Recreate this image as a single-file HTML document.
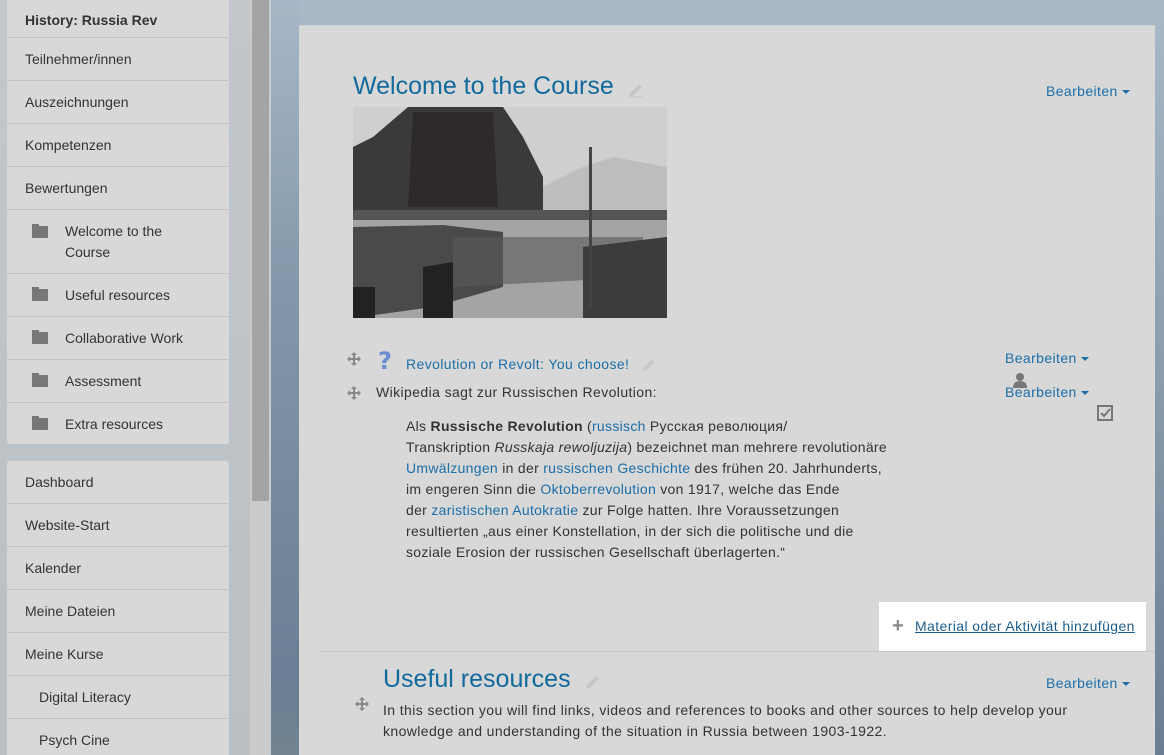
<!DOCTYPE html>
<html><head><meta charset="utf-8">
<style>
*{margin:0;padding:0;box-sizing:border-box}
html,body{width:1164px;height:755px;overflow:hidden}
body{position:relative;font-family:"Liberation Sans",Arial,sans-serif;font-size:14px;color:#333;
background:linear-gradient(180deg,#a9b9c7 0%,#8a9cad 50%,#6a7d92 100%)}
.leftbg{position:absolute;left:0;top:0;width:250px;height:755px;background:linear-gradient(180deg,#c3c7cb,#b9bfc3)}
.track{position:absolute;left:250px;top:0;width:21px;height:755px;background:#cbcbcb}
.thumb{position:absolute;left:252px;top:0;width:17px;height:501px;background:#a4a4a4}
.blue{position:absolute;left:271px;top:0;width:28px;height:755px;background:linear-gradient(180deg,#a7b7c6,#8296a9 40%,#6a7f95 90%,#72838f)}
.blk{position:absolute;left:7px;width:222px;background:#d8d8d8;border-radius:3px;overflow:hidden}
.it{position:absolute;left:0;width:222px;border-bottom:1px solid #c4c4c4;padding-left:18px;display:flex;align-items:center;font-size:14px;color:#333}
.fold{display:inline-block;width:16px;height:12px;background:#777;margin-left:7px;margin-right:17px;position:relative;border-radius:1px}
.fold:before{content:"";position:absolute;left:0;top:-2px;width:7px;height:3px;background:#777}
.panel{position:absolute;left:299px;top:25px;width:856px;height:730px;background:#d8d8d8;border-top:1px solid #cfcfcf}
.a{position:absolute;white-space:nowrap}
.h{color:#126a9c;font-size:25px}
.bb{color:#1b6ea8;font-size:14px}
.car{display:inline-block;border-left:4px solid transparent;border-right:4px solid transparent;border-top:4px solid #1b6ea8;margin-left:4px;vertical-align:middle}
.ls{letter-spacing:0.4px}
.txt{position:absolute;left:406px;top:416px;width:540px;line-height:21px;font-size:14px;color:#333;letter-spacing:0.3px}
.txt a{color:#1b6ea8;text-decoration:none}
.move{position:absolute;width:14px;height:14px}
</style></head><body>
<div class="leftbg"></div>
<div class="track"></div><div class="thumb"></div>
<div class="blue"></div>

<div class="blk" style="top:-6px;height:450px">
 <div class="it" style="top:0;height:44px;font-weight:bold;padding-top:8px">History: Russia Rev</div>
 <div class="it" style="top:44px;height:43px">Teilnehmer/innen</div>
 <div class="it" style="top:87px;height:43px">Auszeichnungen</div>
 <div class="it" style="top:130px;height:43px">Kompetenzen</div>
 <div class="it" style="top:173px;height:43px">Bewertungen</div>
 <div class="it" style="top:216px;height:64px;line-height:21px"><span class="fold" style="margin-top:-20px"></span><span>Welcome to the<br>Course</span></div>
 <div class="it" style="top:280px;height:43px"><span class="fold"></span>Useful resources</div>
 <div class="it" style="top:323px;height:43px"><span class="fold"></span>Collaborative Work</div>
 <div class="it" style="top:366px;height:43px"><span class="fold"></span>Assessment</div>
 <div class="it" style="top:409px;height:41px;border-bottom:none"><span class="fold"></span>Extra resources</div>
</div>

<div class="blk" style="top:461px;height:300px">
 <div class="it" style="top:0;height:43px">Dashboard</div>
 <div class="it" style="top:43px;height:43px">Website-Start</div>
 <div class="it" style="top:86px;height:43px">Kalender</div>
 <div class="it" style="top:129px;height:43px">Meine Dateien</div>
 <div class="it" style="top:172px;height:43px">Meine Kurse</div>
 <div class="it" style="top:215px;height:43px;padding-left:32px">Digital Literacy</div>
 <div class="it" style="top:258px;height:43px;padding-left:32px">Psych Cine</div>
</div>

<div class="panel"></div>

<div class="a h" style="left:353px;top:72px">Welcome to the Course</div>
<svg class="a" style="left:627px;top:80px" width="18" height="18" viewBox="0 0 18 18"><path d="M3 13 L12 4 L15 7 L6 16 L2 17 Z" fill="#c6c6c6"/><rect x="2" y="16.5" width="14" height="1" fill="#c6c6c6"/></svg>
<div class="a bb ls" style="left:1046px;top:83px">Bearbeiten<span class="car"></span></div>

<svg class="a" style="left:353px;top:107px" width="314" height="211" viewBox="0 0 314 211">
<rect width="314" height="211" fill="#9a9a9a"/>
<rect x="0" y="0" width="314" height="110" fill="#cfcfcf"/>
<path d="M0 110 L0 40 L20 30 L55 0 L150 0 L170 30 L190 70 L190 110 Z" fill="#3a3a3a"/>
<path d="M60 5 L140 5 L145 100 L55 100 Z" fill="#2e2a2a"/>
<path d="M190 110 L190 80 L230 60 L260 50 L314 60 L314 110 Z" fill="#bdbdbd"/>
<rect x="0" y="110" width="314" height="101" fill="#a4a4a4"/>
<rect x="0" y="103" width="314" height="10" fill="#555"/>
<path d="M0 120 L90 118 L150 125 L150 180 L80 200 L0 211 Z" fill="#4a4a4a"/>
<path d="M100 130 L290 130 L290 170 L100 180 Z" fill="#5a5a5a" opacity=".6"/>
<path d="M230 140 L314 130 L314 211 L230 211 Z" fill="#3c3c3c"/>
<path d="M70 160 L100 155 L100 211 L70 211 Z" fill="#222"/>
<rect x="0" y="180" width="22" height="31" fill="#222"/>
<rect x="350" y="0" width="1" height="1" fill="#000"/>
<rect x="352" y="0" width="0" height="0"/>
<rect x="351" y="0" width="0" height="0"/>
<rect x="352" y="0" width="0" height="0"/>
<rect x="352" y="0" width="0" height="0"/>
<rect x="352" y="0" width="0" height="0"/>
<rect x="236" y="40" width="3" height="160" fill="#444"/>
</svg>

<svg class="move" style="left:347px;top:352px" viewBox="0 0 14 14"><path d="M7 0 L10 3 H8 V6 H11 V4 L14 7 L11 10 V8 H8 V11 H10 L7 14 L4 11 H6 V8 H3 V10 L0 7 L3 4 V6 H6 V3 H4 Z" fill="#888"/></svg>
<div class="a" style="left:378px;top:347px;font-size:24px;font-weight:bold;color:#6a8fd0;font-family:'DejaVu Sans',sans-serif">?</div>
<div class="a ls" style="left:406px;top:356px;color:#1b6ea8">Revolution or Revolt: You choose!</div>
<svg class="a" style="left:641px;top:356px" width="16" height="16" viewBox="0 0 18 18"><path d="M3 13 L12 4 L15 7 L6 16 L2 17 Z" fill="#c6c6c6"/></svg>
<div class="a bb ls" style="left:1005px;top:350px">Bearbeiten<span class="car"></span></div>
<svg class="a" style="left:1012px;top:372px" width="16" height="16" viewBox="0 0 16 16"><circle cx="8" cy="5" r="4" fill="#777"/><path d="M1 16 Q1 9 8 9 Q15 9 15 16 Z" fill="#777"/></svg>
<svg class="move" style="left:347px;top:386px" viewBox="0 0 14 14"><path d="M7 0 L10 3 H8 V6 H11 V4 L14 7 L11 10 V8 H8 V11 H10 L7 14 L4 11 H6 V8 H3 V10 L0 7 L3 4 V6 H6 V3 H4 Z" fill="#888"/></svg>
<div class="a ls" style="left:376px;top:384px">Wikipedia sagt zur Russischen Revolution:</div>
<div class="a bb ls" style="left:1005px;top:384px">Bearbeiten<span class="car"></span></div>
<svg class="a" style="left:1097px;top:405px" width="16" height="16" viewBox="0 0 16 16"><rect x="1" y="1" width="14" height="14" fill="none" stroke="#777" stroke-width="2"/><path d="M4 8 L7 11 L13 4" fill="none" stroke="#777" stroke-width="2"/></svg>

<div class="txt">Als <b>Russische Revolution</b> (<a>russisch</a> Русская революция/<br>Transkription <i>Russkaja rewoljuzija</i>) bezeichnet man mehrere revolutionäre<br><a>Umwälzungen</a> in der <a>russischen Geschichte</a> des frühen 20. Jahrhunderts,<br>im engeren Sinn die <a>Oktoberrevolution</a> von 1917, welche das Ende<br>der <a>zaristischen Autokratie</a> zur Folge hatten. Ihre Voraussetzungen<br>resultierten „aus einer Konstellation, in der sich die politische und die<br>soziale Erosion der russischen Gesellschaft überlagerten.“</div>

<div class="a" style="left:879px;top:602px;width:267px;height:50px;background:#fff"></div>
<div class="a" style="left:892px;top:617px;font-size:20px;color:#888;font-weight:bold;line-height:18px">+</div>
<div class="a ls" style="left:915px;top:618px;color:#1b5e8c;text-decoration:underline">Material oder Aktivität hinzufügen</div>
<div class="a" style="left:319px;top:651px;width:836px;height:1px;background:#c8c8c8"></div>

<div class="a h" style="left:383px;top:665px">Useful resources</div>
<svg class="a" style="left:584px;top:672px" width="18" height="18" viewBox="0 0 18 18"><path d="M3 13 L12 4 L15 7 L6 16 L2 17 Z" fill="#c6c6c6"/></svg>
<div class="a bb ls" style="left:1046px;top:675px">Bearbeiten<span class="car"></span></div>
<svg class="move" style="left:355px;top:697px" viewBox="0 0 14 14"><path d="M7 0 L10 3 H8 V6 H11 V4 L14 7 L11 10 V8 H8 V11 H10 L7 14 L4 11 H6 V8 H3 V10 L0 7 L3 4 V6 H6 V3 H4 Z" fill="#888"/></svg>
<div class="a ls" style="left:383px;top:700px;line-height:21px">In this section you will find links, videos and references to books and other sources to help develop your<br>knowledge and understanding of the situation in Russia between 1903-1922.</div>
</body></html>
